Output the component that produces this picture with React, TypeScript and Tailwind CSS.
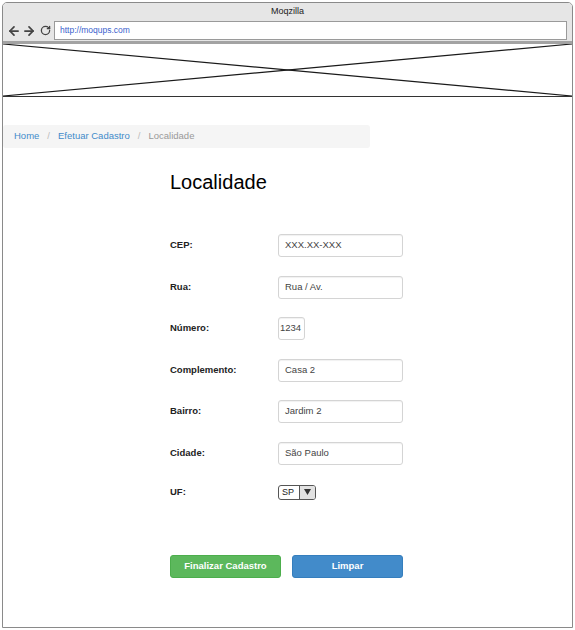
import { ArrowLeft, ArrowRight, RotateCw } from "lucide-react";

const FONT = "font-['Liberation_Sans',Arial,sans-serif]";

type Field = { label: string; value: string; narrow?: boolean };

const FIELDS: Field[] = [
  { label: "CEP:", value: "XXX.XX-XXX" },
  { label: "Rua:", value: "Rua / Av." },
  { label: "Número:", value: "1234", narrow: true },
  { label: "Complemento:", value: "Casa 2" },
  { label: "Bairro:", value: "Jardim 2" },
  { label: "Cidade:", value: "São Paulo" },
];

function Row({ label, children }: { label: string; children: React.ReactNode }) {
  return (
    <div className="flex items-center h-[23px]">
      <span className="w-[108px] text-[9.5px] font-bold text-[#222]">{label}</span>
      {children}
    </div>
  );
}

export default function App() {
  return (
    <div className={`w-[575px] h-[630px] bg-white pt-[2px] pl-[2px] ${FONT}`}>
      <div className="w-[571px] h-[626px] border border-[#8a8a8a] rounded-t-[5px] overflow-hidden flex flex-col">
        {/* browser chrome */}
        <div className="h-[41px] bg-[#e6e6e6] border-b-[3px] border-[#a3a3a3] flex flex-col shrink-0">
          <div className="h-[17px] flex items-center justify-center text-[9px] text-[#222]">Moqzilla</div>
          <div className="flex items-center h-[19px] mt-[1px]">
            <div className="flex items-center gap-[1px] pl-[4px] w-[51px] text-[#444]">
              <ArrowLeft size={14} strokeWidth={3} />
              <ArrowRight size={14} strokeWidth={3} />
              <RotateCw size={11} strokeWidth={2.8} className="ml-[3px]" />
            </div>
            <div className="w-[513px] h-[19px] bg-white border border-[#9a9a9a] flex items-center pl-[5px] text-[8.5px] text-[#3a5fcd]">
              http://moqups.com
            </div>
          </div>
        </div>

        {/* image placeholder */}
        <div className="relative h-[53px] border-b border-[#333] shrink-0">
          <svg className="absolute inset-0 w-full h-full" preserveAspectRatio="none" viewBox="0 0 569 52">
            <line x1="0" y1="0" x2="569" y2="52" stroke="#1a1a1a" strokeWidth="1.2" vectorEffect="non-scaling-stroke" />
            <line x1="0" y1="52" x2="569" y2="0" stroke="#1a1a1a" strokeWidth="1.2" vectorEffect="non-scaling-stroke" />
          </svg>
        </div>

        {/* breadcrumb */}
        <div className="mt-[28px] w-[367px] h-[23px] bg-[#f5f5f5] rounded-[3px] flex items-center pl-[11px] text-[9.5px] gap-[8px] shrink-0">
          <span className="text-[#428bca]">Home</span>
          <span className="text-[#bbb]">/</span>
          <span className="text-[#428bca]">Efetuar Cadastro</span>
          <span className="text-[#bbb]">/</span>
          <span className="text-[#999]">Localidade</span>
        </div>

        {/* form */}
        <div className="pl-[167px] flex flex-col">
          <h1 className="mt-[22px] text-[20px] leading-[24px] text-black">Localidade</h1>

          <div className="mt-[40px] flex flex-col gap-[18.5px]">
            {FIELDS.map((f) => (
              <Row key={f.label} label={f.label}>
                <div
                  className={`h-[23px] bg-white border border-[#d4d4d4] rounded-[3px] shadow-[inset_0_1px_1px_rgba(0,0,0,0.06)] flex items-center text-[9.5px] text-[#444] ${
                    f.narrow ? "w-[27px] pl-[1px]" : "w-[125px] pl-[6px]"
                  }`}
                >
                  {f.value}
                </div>
              </Row>
            ))}
          </div>

          <div className="mt-[16px]">
            <Row label="UF:">
              <div className="w-[38px] h-[15px] border border-[#555] rounded-[3px] flex text-[9px] leading-none text-[#222] overflow-hidden">
                <span className="w-[20px] flex items-center pl-[3px]">SP</span>
                <span className="flex-1 bg-[#e2e2e2] border-l border-[#555] flex items-center justify-center">
                  <svg width="7" height="6" viewBox="0 0 7 6">
                    <polygon points="0,0 7,0 3.5,6" fill="#333" />
                  </svg>
                </span>
              </div>
            </Row>
          </div>

          <div className="mt-[51px] flex gap-[11px]">
            <button className="w-[111px] h-[23px] rounded-[3px] bg-[#5cb85c] border border-[#4cae4c] text-white text-[9.5px] font-bold">
              Finalizar Cadastro
            </button>
            <button className="w-[111px] h-[23px] rounded-[3px] bg-[#428bca] border border-[#357ebd] text-white text-[9.5px] font-bold">
              Limpar
            </button>
          </div>
        </div>
      </div>
    </div>
  );
}
